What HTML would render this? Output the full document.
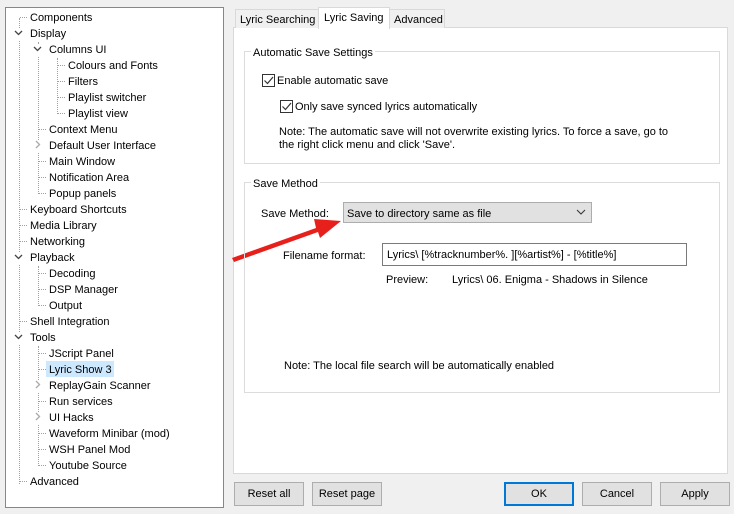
<!DOCTYPE html>
<html><head><style>
*{margin:0;padding:0;box-sizing:border-box}
body{width:734px;height:514px;background:#f0f0f0;font:11px "Liberation Sans",sans-serif;color:#000;position:relative;overflow:hidden}
.a{position:absolute;white-space:nowrap}
.t{position:absolute;white-space:nowrap;line-height:14px;margin-top:1px}
.tree{position:absolute;left:5px;top:7px;width:219px;height:501px;background:#fff;border:1px solid #828790}
.vl{position:absolute;border-left:1px dotted #a0a0a0;width:0}
.box{position:absolute;border:1px solid #dcdcdc}
.btn{position:absolute;top:482px;height:24px;width:70px;background:#e1e1e1;border:1px solid #adadad;text-align:center;line-height:23px}
.cb{position:absolute;width:13px;height:13px;border:1px solid #333;background:#fff}
</style></head><body>
<div class="tree">
<div class="vl" style="left:13px;top:10px;height:466px"></div>
<div class="vl" style="left:32px;top:34px;height:152px"></div>
<div class="vl" style="left:51px;top:50px;height:56px"></div>
<div class="vl" style="left:32px;top:258px;height:40px"></div>
<div class="vl" style="left:32px;top:338px;height:120px"></div>
</div>
<svg class="a" style="left:0;top:0" width="230" height="514">
<g stroke="#a0a0a0" stroke-dasharray="1 1" fill="none">
<path d="M20 17.5h8M58 65.5h8M58 81.5h8M58 97.5h8M58 113.5h8M39 129.5h8M39 161.5h8M39 177.5h8M39 193.5h8M20 209.5h8M20 225.5h8M20 241.5h8M39 273.5h8M39 289.5h8M39 305.5h8M20 321.5h8M39 353.5h8M39 369.5h8M39 401.5h8M39 433.5h8M39 449.5h8M39 465.5h8M20 481.5h8"/>
</g>
<g fill="#fff"><rect x="13" y="28" width="12" height="12"/><rect x="13" y="252" width="12" height="12"/><rect x="13" y="332" width="12" height="12"/><rect x="32" y="44" width="12" height="12"/><rect x="32" y="140" width="12" height="12"/><rect x="32" y="380" width="12" height="12"/><rect x="32" y="412" width="12" height="12"/></g>
<g stroke="#444" stroke-width="1.3" fill="none">
<path d="M15 31l3.5 3.5 3.5-3.5M15 255l3.5 3.5 3.5-3.5M15 335l3.5 3.5 3.5-3.5M34 47l3.5 3.5 3.5-3.5"/>
</g>
<g stroke="#aaa" stroke-width="1.3" fill="none">
<path d="M36 141l3.5 3.5-3.5 3.5M36 381l3.5 3.5-3.5 3.5M36 413l3.5 3.5-3.5 3.5"/>
</g>
</svg>
<div style="position:absolute;left:46px;top:361px;width:68px;height:16px;background:#cce8ff"></div>
<div class="t" style="left:30px;top:10px">Components</div>
<div class="t" style="left:30px;top:26px">Display</div>
<div class="t" style="left:49px;top:42px">Columns UI</div>
<div class="t" style="left:68px;top:58px">Colours and Fonts</div>
<div class="t" style="left:68px;top:74px">Filters</div>
<div class="t" style="left:68px;top:90px">Playlist switcher</div>
<div class="t" style="left:68px;top:106px">Playlist view</div>
<div class="t" style="left:49px;top:122px">Context Menu</div>
<div class="t" style="left:49px;top:138px">Default User Interface</div>
<div class="t" style="left:49px;top:154px">Main Window</div>
<div class="t" style="left:49px;top:170px">Notification Area</div>
<div class="t" style="left:49px;top:186px">Popup panels</div>
<div class="t" style="left:30px;top:202px">Keyboard Shortcuts</div>
<div class="t" style="left:30px;top:218px">Media Library</div>
<div class="t" style="left:30px;top:234px">Networking</div>
<div class="t" style="left:30px;top:250px">Playback</div>
<div class="t" style="left:49px;top:266px">Decoding</div>
<div class="t" style="left:49px;top:282px">DSP Manager</div>
<div class="t" style="left:49px;top:298px">Output</div>
<div class="t" style="left:30px;top:314px">Shell Integration</div>
<div class="t" style="left:30px;top:330px">Tools</div>
<div class="t" style="left:49px;top:346px">JScript Panel</div>
<div class="t" style="left:49px;top:362px">Lyric Show 3</div>
<div class="t" style="left:49px;top:378px">ReplayGain Scanner</div>
<div class="t" style="left:49px;top:394px">Run services</div>
<div class="t" style="left:49px;top:410px">UI Hacks</div>
<div class="t" style="left:49px;top:426px">Waveform Minibar (mod)</div>
<div class="t" style="left:49px;top:442px">WSH Panel Mod</div>
<div class="t" style="left:49px;top:458px">Youtube Source</div>
<div class="t" style="left:30px;top:474px">Advanced</div>

<div style="position:absolute;left:233px;top:27px;width:495px;height:447px;background:#fff;border:1px solid #d9d9d9"></div>
<div style="position:absolute;left:235px;top:9px;width:84px;height:19px;border:1px solid #d9d9d9;border-bottom:none;background:#f0f0f0"></div>
<div class="t" style="left:240px;top:12px">Lyric Searching</div>
<div style="position:absolute;left:389px;top:9px;width:56px;height:19px;border:1px solid #d9d9d9;border-bottom:none;background:#f0f0f0"></div>
<div class="t" style="left:394px;top:12px">Advanced</div>
<div style="position:absolute;left:318px;top:7px;width:72px;height:22px;border:1px solid #d9d9d9;border-bottom:none;background:#fff"></div>
<div class="t" style="left:324px;top:10px">Lyric Saving</div>

<div class="box" style="left:244px;top:51px;width:476px;height:113px"></div>
<div class="t" style="left:251px;top:45px;background:#fff;padding:0 2px">Automatic Save Settings</div>
<div class="cb" style="left:262px;top:74px"></div>
<div class="t" style="left:277px;top:73px">Enable automatic save</div>
<div class="cb" style="left:280px;top:100px"></div>
<div class="t" style="left:295px;top:99px">Only save synced lyrics automatically</div>
<svg class="a" style="left:0;top:0" width="734" height="514"><g stroke="#333" stroke-width="1.2" fill="none"><path d="M264.5 80.5l3 3 5.5-6.5M282.5 106.5l3 3 5.5-6.5"/></g>
<path d="M232 258 L316 228 L314 219 L341 221 L320 238 L318 232 L234 262Z" fill="#e8201c"/></svg>
<div class="t" style="left:279px;top:124px">Note: The automatic save will not overwrite existing lyrics. To force a save, go to</div>
<div class="t" style="left:279px;top:137px">the right click menu and click 'Save'.</div>

<div class="box" style="left:244px;top:182px;width:476px;height:211px"></div>
<div class="t" style="left:251px;top:176px;background:#fff;padding:0 2px">Save Method</div>
<div class="t" style="left:261px;top:206px">Save Method:</div>
<div style="position:absolute;left:343px;top:202px;width:249px;height:21px;background:#e1e1e1;border:1px solid #adadad"></div>
<div class="t" style="left:347px;top:206px">Save to directory same as file</div>
<svg class="a" style="left:576px;top:208px" width="10" height="8"><path d="M1 2l4 4 4-4" stroke="#333" fill="none"/></svg>
<div class="t" style="left:283px;top:248px">Filename format:</div>
<div style="position:absolute;left:382px;top:243px;width:305px;height:23px;border:1px solid #7a7a7a;background:#fff"></div>
<div class="t" style="left:387px;top:247px">Lyrics\ [%tracknumber%. ][%artist%] - [%title%]</div>
<div class="t" style="left:386px;top:272px">Preview:</div>
<div class="t" style="left:452px;top:272px">Lyrics\ 06. Enigma - Shadows in Silence</div>
<div class="t" style="left:284px;top:358px">Note: The local file search will be automatically enabled</div>

<div class="btn" style="left:234px">Reset all</div>
<div class="btn" style="left:312px">Reset page</div>
<div class="btn" style="left:504px;border:2px solid #0078d7;line-height:21px">OK</div>
<div class="btn" style="left:582px">Cancel</div>
<div class="btn" style="left:660px">Apply</div>
</body></html>
